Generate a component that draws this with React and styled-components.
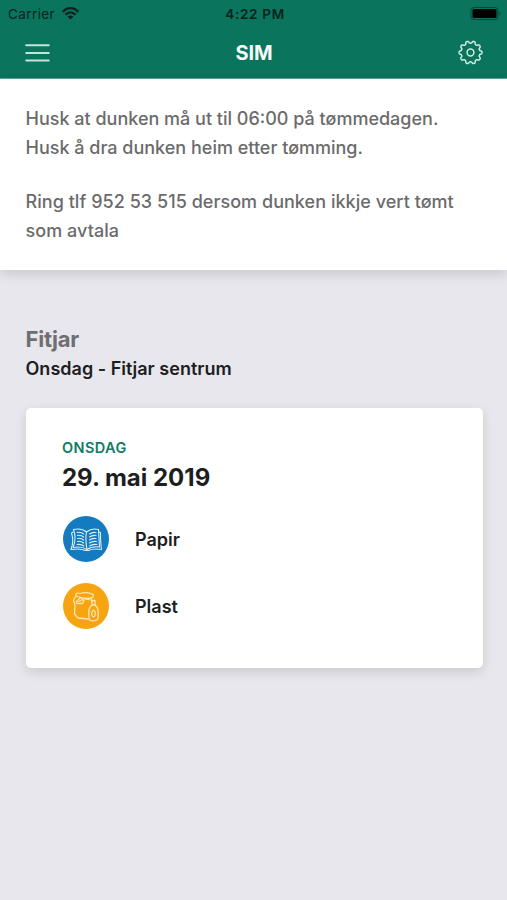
import React from 'react';
import styled, { createGlobalStyle } from 'styled-components';

const GlobalStyle = createGlobalStyle`
  body {
    margin: 0;
    background-color: #e8e7ed;
    font-family: Inter, 'Liberation Sans', sans-serif;
    color: #1c1e22;
  }
`

const Screen = styled.div`
  min-height: 900px;
`

const Header = styled.header`
  height: 78px;
  background-color: #0a745d;
  border-bottom: 1px solid #5fa697;
`

const StatusBar = styled.div`
  display: grid;
  grid-template-columns: 1fr auto 1fr;
  align-items: center;
  height: 27px;
  padding: 0 5px 0 8px;
  color: #06231c;
  font-size: 13.5px;
`

const Carrier = styled.div`
  display: flex;
  align-items: center;
  gap: 7px;
  letter-spacing: 0.4px;
`

const Clock = styled.div`
  font-size: 13.5px;
  font-weight: 600;
  letter-spacing: 0.7px;
`

const Battery = styled.svg`
  justify-self: end;
`

const NavBar = styled.nav`
  display: flex;
  align-items: center;
  justify-content: space-between;
  height: 51px;
  padding: 0 24px 0 25px;
`

const Title = styled.h1`
  margin: 0;
  color: #f4fbf9;
  font-size: 20px;
  font-weight: 700;
  letter-spacing: -0.1px;
`

const Notice = styled.section`
  box-sizing: border-box;
  height: 191px;
  padding: 25px 25px 0 25.5px;
  background-color: #fff;
  box-shadow: 0 4px 12px rgba(0, 0, 0, 0.14);
  color: #6b6b6b;
`

const Paragraph = styled.p`
  margin: 0 0 24px;
  font-size: 18px;
  font-weight: 500;
  line-height: 29.4px;
  letter-spacing: ${props => props.$spacing || '0'};
`

const Content = styled.main`
  padding: 54px 24.5px 0 25.5px;
`

const Town = styled.h2`
  margin: 0;
  color: #6f6f73;
  font-size: 22px;
  font-weight: 700;
  line-height: 30px;
  letter-spacing: -0.2px;
`

const Route = styled.div`
  margin-top: 1px;
  font-size: 18px;
  font-weight: 600;
  line-height: 28px;
  letter-spacing: 0.02px;
`

const Card = styled.article`
  box-sizing: border-box;
  height: 260.5px;
  margin-top: 24.5px;
  padding: 30px 37px 0 36.5px;
  background-color: #fff;
  border-radius: 5px;
  box-shadow: 0 4px 12px rgba(0, 0, 0, 0.13);
`

const Weekday = styled.div`
  color: #0f7d62;
  font-size: 14.5px;
  font-weight: 600;
  line-height: 20px;
  letter-spacing: 0.4px;
`

const DateText = styled.div`
  margin-top: 3px;
  font-size: 24px;
  font-weight: 700;
  line-height: 34px;
  letter-spacing: 0;
`

const WasteList = styled.ul`
  display: grid;
  gap: 20px;
  margin: 21px 0 0;
  padding: 0;
  list-style: none;
`

const WasteItem = styled.li`
  display: flex;
  align-items: center;
  gap: 26px;
  height: 47px;
  font-size: 18px;
  font-weight: 600;
`

const WasteBadge = styled.span`
  display: flex;
  width: 46px;
  height: 46px;
  margin-left: 1px;
  border-radius: 50%;
  background-color: ${props => props.$color};
`

const WasteLabel = styled.span`
  padding-top: 1px;
`

const WifiIcon = () => (
  <svg width="17" height="13" viewBox="0 0 17 13" fill="none" stroke="#06231c" strokeWidth="2.3">
    <path d="M0.8 4.9C5 -0.1 12 -0.1 16.2 4.9" />
    <path d="M3.5 7.7C6.4 4.5 10.6 4.5 13.5 7.7" />
    <path d="M8.5 12.4L5.6 9.6C7.2 8.2 9.8 8.2 11.4 9.6Z" fill="#06231c" stroke="none" />
  </svg>
);

const BatteryIcon = () => (
  <Battery width="32" height="15" viewBox="0 0 32 15">
    <rect x="1" y="1.5" width="27" height="12" rx="3" fill="none" stroke="#064637" />
    <rect x="2.5" y="3" width="24" height="9" rx="1.5" fill="#000" />
    <path d="M29.5 5.5Q31.5 7.5 29.5 9.5Z" fill="#064637" />
  </Battery>
);

const MenuIcon = () => (
  <svg width="25" height="20" viewBox="0 0 25 20" stroke="#c3e4dc" strokeWidth="2" strokeLinecap="round">
    <path d="M1.2 2.3H23.8M1.2 10H23.8M1.2 17.5H23.8" />
  </svg>
);

// Outline of a cog with ten rounded teeth
const cogPath = () => {
  const points = [];
  for (let i = 0; i < 180; i += 1) {
    const angle = (i / 180) * Math.PI * 2;
    const radius = 10.4 + 1.2 * Math.tanh(1.6 * Math.cos(10 * angle));
    points.push(`${(12.5 + radius * Math.cos(angle)).toFixed(2)} ${(12.5 + radius * Math.sin(angle)).toFixed(2)}`);
  }
  return `M${points.join('L')}Z`;
};

const SettingsIcon = () => (
  <svg width="25" height="25" viewBox="0 0 25 25" fill="none" stroke="#cdebe3" strokeWidth="1.5" strokeLinejoin="round">
    <path d={cogPath()} />
    <circle cx="12.5" cy="12.5" r="3.4" />
  </svg>
);

const PaperIcon = () => (
  <svg width="46" height="46" viewBox="0 0 46 46" fill="none" stroke="#d9edf9" strokeWidth="1.1" strokeLinecap="round" strokeLinejoin="round">
    <path d="M10.5 13.5C15 12.5 20 13 23.5 16C27 13 31.5 12.5 35.5 13.5L36.5 31C32 30.5 27.5 31 24 33.5C20 31 15 30.5 10 31.5C12.5 25.5 12.5 19 10.5 13.5Z" />
    <path d="M23.5 16C22.5 21 23 28 24 33.5" />
    <path d="M10.2 16L8.5 17C10.5 23 10 28.5 8 33.5C14 32.5 19 33 22.5 34.5H25.5C29 32.8 33.5 32.7 38.5 33.5C37.5 27.5 37.5 22 37.5 16.5L36 16" />
    <path d="M14 16.5C16.5 16 19 16.5 20.5 18M14.5 19.5C17 19 19 19.5 20.5 21M14.5 22.5C17 22 19 22.5 20.5 24M14.5 25.5C17 25 19 25.5 20.5 27M14 28.5C17 28 19 28.5 21 30" />
    <path d="M26.5 18C28.5 16.5 30.5 16 33 16.5M26.5 21C28.5 19.5 30.5 19 33 19.5M26.5 24C28.5 22.5 30.5 22 33 22.5M26.5 27C28.5 25.5 30.5 25 33.5 25.5M26.5 30C28.5 28.5 30.5 28 34 28.5" />
  </svg>
);

const PlasticIcon = () => (
  <svg width="46" height="46" viewBox="0 0 46 46" fill="none" stroke="#ffe5b0" strokeWidth="1.3" strokeLinecap="round" strokeLinejoin="round">
    <path d="M13 13C12 10.5 14 9.5 17 10.5C20 9.5 25 9.5 29 11C31.5 11.5 30.5 14.5 28 15C23 15.8 18 15 13 13Z" />
    <path d="M13 13L10.5 17L12 22L11.5 31L15 35L25 36" />
    <path d="M13.5 18.5L17.5 14.5L21 17.5L19.5 20.5H14ZM16 18.5L20 16.5" />
    <path d="M21 15.5L26 16.5M28 15L28.5 19" />
    <path d="M29 17.5H32V22C35.5 24.5 35.5 28 35 35C34.5 38.5 26.5 39 26 35.5C25.5 28 25.5 24.5 29 22Z" />
    <path d="M29 22H32" />
    <path d="M30.5 27C28 28.5 28 33 30.5 34C33 32.5 33 28.5 30.5 27Z" />
  </svg>
);

const wasteTypes = [
  { name: 'Papir', color: '#147bc1', icon: <PaperIcon /> },
  { name: 'Plast', color: '#f6a40f', icon: <PlasticIcon /> }
];

const App = () => (
  <Screen>
    <GlobalStyle />
    <Header>
      <StatusBar>
        <Carrier>
          Carrier
          <WifiIcon />
        </Carrier>
        <Clock>4:22 PM</Clock>
        <BatteryIcon />
      </StatusBar>
      <NavBar>
        <MenuIcon />
        <Title>SIM</Title>
        <SettingsIcon />
      </NavBar>
    </Header>
    <Notice>
      <Paragraph>
        Husk at dunken må ut til 06:00 på tømmedagen.
        <br />
        Husk å dra dunken heim etter tømming.
      </Paragraph>
      <Paragraph $spacing="0.04px">
        Ring tlf 952 53 515 dersom dunken ikkje vert tømt
        <br />
        som avtala
      </Paragraph>
    </Notice>
    <Content>
      <Town>Fitjar</Town>
      <Route>Onsdag - Fitjar sentrum</Route>
      <Card>
        <Weekday>ONSDAG</Weekday>
        <DateText>29. mai 2019</DateText>
        <WasteList>
          {wasteTypes.map(type => (
            <WasteItem key={type.name}>
              <WasteBadge $color={type.color}>{type.icon}</WasteBadge>
              <WasteLabel>{type.name}</WasteLabel>
            </WasteItem>
          ))}
        </WasteList>
      </Card>
    </Content>
  </Screen>
);

export default App;
